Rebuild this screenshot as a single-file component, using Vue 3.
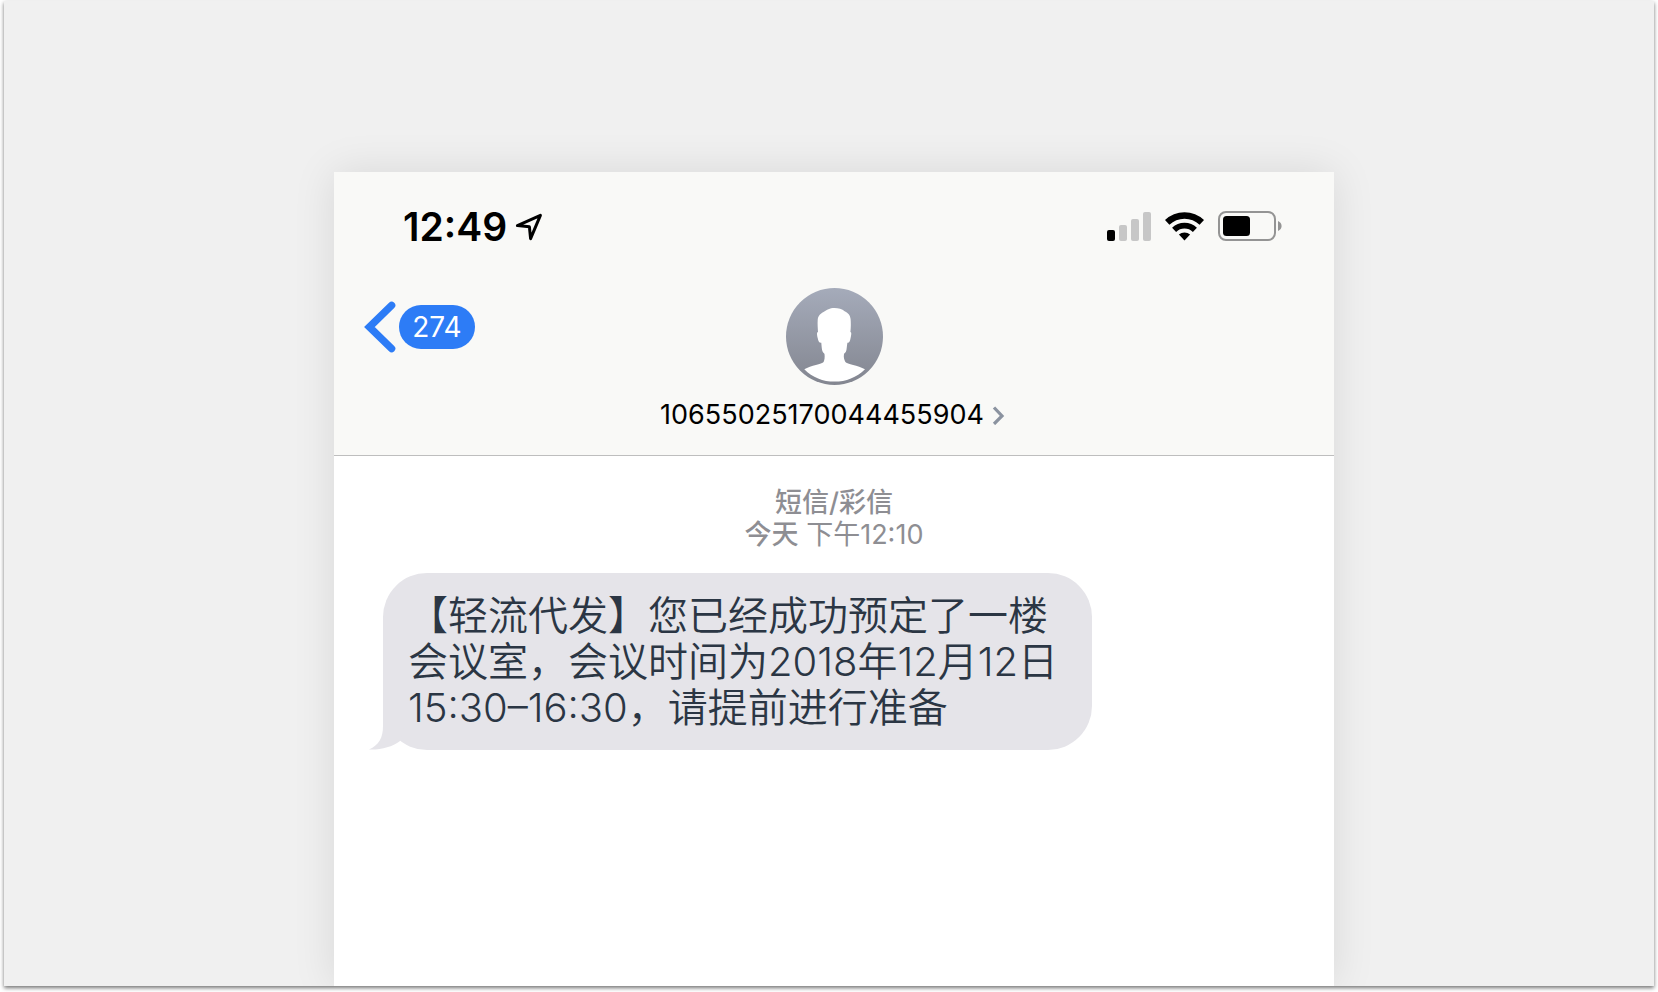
<script setup>
const phone = '10655025170044455904'
const unread = 274
const message =
  '【轻流代发】您已经成功预定了一楼会议室，会议时间为2018年12月12日15:30–16:30，请提前进行准备'
</script>

<template>
  <div class="page">
    <main class="stage">
      <section class="phone">
        <header class="header">
          <div class="status">
            <div class="clock">
              <time>12:49</time>
              <svg width="28" height="28" viewBox="0 0 28 28" aria-hidden="true">
                <path d="M2.4 12.6 L25.4 2.4 L15.6 25.6 L14.4 13.8 Z" fill="none" stroke="#000" stroke-width="3" stroke-linejoin="round" />
              </svg>
            </div>
            <div class="indicators">
              <svg width="45" height="30" viewBox="0 0 45 30" aria-hidden="true">
                <rect x="0" y="19" width="8" height="11" rx="2" fill="#000" />
                <rect x="12" y="14" width="8" height="16" rx="2" fill="#c7c7c7" />
                <rect x="24" y="8" width="8" height="22" rx="2" fill="#c7c7c7" />
                <rect x="36" y="1" width="8" height="29" rx="2" fill="#c7c7c7" />
              </svg>
              <svg width="40" height="30" viewBox="0 0 40 30" aria-hidden="true">
                <g fill="none" stroke="#000">
                  <path d="M2.2 11.4 A25 25 0 0 1 36.8 11.4" stroke-width="6.4" />
                  <path d="M9.1 18.8 A15 15 0 0 1 29.9 18.8" stroke-width="5.8" />
                </g>
                <path d="M13.9 23.6 A8.4 8.4 0 0 1 25.1 23.6 L19.5 29.6 Z" fill="#000" />
              </svg>
              <svg width="65" height="30" viewBox="0 0 65 30" aria-hidden="true">
                <rect x="1" y="1" width="56" height="28" rx="7" fill="none" stroke="#949494" stroke-width="2" />
                <rect x="5" y="5" width="27" height="20" rx="3.5" fill="#000" />
                <path d="M60 10 Q63.6 11.6 63.6 15 T60 20 Z" fill="#949494" />
              </svg>
            </div>
          </div>

          <nav class="nav">
            <button class="back" type="button" aria-label="返回">
              <svg width="32" height="52" viewBox="0 0 32 52" aria-hidden="true">
                <path d="M27.6 4.4 L5.4 26 L27.6 47.6" fill="none" stroke="#2d7cf6" stroke-width="7.4" stroke-linecap="round" stroke-linejoin="miter" />
              </svg>
              <span class="badge">{{ unread }}</span>
            </button>

            <button class="contact" type="button">
              <svg class="avatar" width="97" height="97" viewBox="0 0 97 97" aria-hidden="true">
                <defs>
                  <linearGradient id="avatar-fill" x1="0" y1="0" x2="0" y2="1">
                    <stop offset="0" stop-color="#a5abba" />
                    <stop offset="1" stop-color="#838690" />
                  </linearGradient>
                </defs>
                <circle cx="48.5" cy="48.5" r="48.5" fill="url(#avatar-fill)" />
                <path
                  d="M48.5 20 C43.5 20 41 22 37.5 24 C33.5 26.3 32 28.5 31.7 32 C31.4 36 31.8 40 32 44 C30.6 44 30.9 47 31.7 50 C32.3 53 33 55 35.3 54.8 C35.6 58 35.8 62 36.6 63.6 C37 64.8 37.9 65 38.5 66 C38.9 69 38.6 72 37.6 74 C36 76 25 77.6 18.3 81.2 C26.5 89.5 37 93.6 48.5 93.6 C60 93.6 70.5 89.5 79 81.2 C72 77.6 61 76 59.4 74 C58 71.5 57.5 69 58 66 C58.6 65 59.5 64.8 60 63.6 C60.8 62 60.8 58 61.4 54.8 C63.4 55 64 53 64.6 50 C65.4 47 65.7 44 64.4 44 C65 39 64.9 35 64.6 31 C64.2 26.8 62 24.8 59 23.4 C55.8 21 52.5 20 48.5 20 Z"
                  fill="#fff"
                />
              </svg>
              <span class="number">
                {{ phone }}
                <svg width="16" height="20" viewBox="0 0 16 20" aria-hidden="true">
                  <path d="M2 2.5 L10 11 L2 19" fill="none" stroke="#8b93a0" stroke-width="3.2" stroke-linecap="butt" stroke-linejoin="miter" />
                </svg>
              </span>
            </button>
          </nav>
        </header>

        <div class="thread">
          <p class="stamp">
            <b>短信/彩信</b><br />
            <b>今天</b> 下午12:10
          </p>
          <div class="bubble">
            <svg class="tail" width="36" height="46" viewBox="0 0 36 46" aria-hidden="true">
              <path d="M14 0 V22 C14 34 10 41 0 45.5 C12 46 23 43 31 37 L36 20 V0 Z" fill="#e5e4e9" />
            </svg>
            <p class="text">{{ message }}</p>
          </div>
        </div>
      </section>
    </main>
  </div>
</template>

<style>
body {
  margin: 0;
  background: #fff;
}
</style>

<style scoped>
.page {
  box-sizing: border-box;
  display: flex;
  min-height: 100vh;
  padding: 1px 4px 6px;
  font-family: Inter, "Noto Sans CJK SC", sans-serif;
}

.stage {
  flex: 1;
  display: flex;
  padding: 171px 320px 0 330px;
  background: #f0f0f0;
  box-shadow: 0 2px 4px rgba(0, 0, 0, 0.55);
  clip-path: inset(-1px -4px -6px -4px);
}

.phone {
  flex: 1;
  min-width: 0;
  background: #fff;
  box-shadow: 0 0 40px rgba(0, 0, 0, 0.1);
  clip-path: inset(-60px -60px 0 -60px);
}

.header {
  background: #f9f9f7;
  border-bottom: 1px solid #bebebe;
}

.status {
  display: flex;
  align-items: center;
  justify-content: space-between;
  height: 110px;
  padding: 0 51px 0 69px;
}

.clock {
  display: flex;
  align-items: center;
  gap: 8px;
  font-size: 39px;
  font-weight: 600;
  line-height: 44px;
  color: #000;
}

.indicators {
  display: flex;
  align-items: center;
  gap: 13px;
  padding-bottom: 2px;
}

.nav {
  display: grid;
  grid-template-columns: 1fr auto 1fr;
  align-items: start;
  padding: 6px 30px 24px;
}

button {
  padding: 0;
  border: 0;
  background: none;
  font-family: inherit;
  cursor: pointer;
}

.back {
  display: flex;
  align-items: center;
  gap: 3px;
  justify-self: start;
  margin-top: 13px;
}

.badge {
  box-sizing: border-box;
  min-width: 76px;
  padding: 0 12px;
  border-radius: 22px;
  background: #2d7cf6;
  color: #fff;
  font-size: 28px;
  font-weight: 400;
  line-height: 44px;
}

.contact {
  display: flex;
  flex-direction: column;
  align-items: center;
  gap: 14px;
}

.number {
  display: flex;
  align-items: center;
  gap: 8px;
  color: #000;
  font-size: 27px;
  line-height: 32px;
}

.thread {
  padding: 31px 36px;
}

.stamp {
  margin: 0 0 22px;
  color: #8e8e93;
  font-size: 27px;
  line-height: 32px;
  text-align: center;
}

.stamp b {
  font-weight: 500;
}

.bubble {
  position: relative;
  box-sizing: border-box;
  width: 709px;
  max-width: 100%;
  margin-left: 13px;
  padding: 20px 26px 19px 25px;
  border-radius: 44px;
  background: #e5e4e9;
}

.tail {
  position: absolute;
  left: -14px;
  bottom: 0;
}

.text {
  position: relative;
  margin: 0;
  color: #2b3644;
  font-size: 40px;
  font-weight: 350;
  line-height: 46px;
}
</style>
